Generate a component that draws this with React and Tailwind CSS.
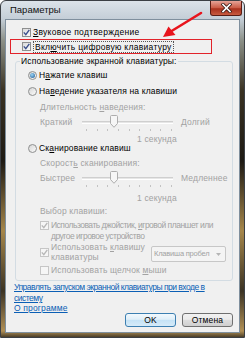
import React from 'react';

const font = { fontFamily: '"Liberation Sans", Arial, sans-serif' };

const Check = ({ checked, disabled }) => (
  <span
    className={`w-[9px] h-[9px] shrink-0 flex items-center justify-center border ${
      disabled ? 'border-[#c6c6c6] bg-[#f6f6f6]' : 'border-[#8e8f8f] bg-gradient-to-br from-[#dadada] to-[#fbfbfb]'
    }`}
  >
    {checked && (
      <svg width="7" height="7" viewBox="0 0 7 7">
        <path d="M0.8 3.4 L2.8 5.6 L6.3 0.8" fill="none" stroke={disabled ? '#b8b8b8' : '#3b4f8c'} strokeWidth="1.4" />
      </svg>
    )}
  </span>
);

const Radio = ({ checked }) => (
  <span className="w-[9px] h-[9px] shrink-0 rounded-full border border-[#8e8f8f] bg-gradient-to-br from-[#d6d6d6] to-[#fbfbfb] flex items-center justify-center">
    {checked && <span className="w-[5px] h-[5px] rounded-full bg-[radial-gradient(circle_at_40%_35%,#9bd6f6,#1b5592)]" />}
  </span>
);

const Slider = ({ left, right }) => (
  <div className="text-[#a2a2a2]">
    <div className="flex items-center h-[14px] pl-[24px]">
      <span className="w-[42px] leading-[10px]">{left}</span>
      <div className="relative w-[91px] h-[14px]">
        <div className="absolute left-0 right-0 top-[6px] h-[3px] border-t border-t-[#cfcfcf] border-b border-b-white bg-[#e6e6e6]" />
        <svg className="absolute left-[28px] top-0" width="8" height="13" viewBox="0 0 8 13">
          <path d="M0.5 1.5 Q0.5 0.5 1.5 0.5 H6.5 Q7.5 0.5 7.5 1.5 V8.5 L4 12.3 L0.5 8.5 Z" fill="#f6f6f6" stroke="#adadad" />
        </svg>
      </div>
      <span className="ml-[8px] leading-[10px]">{right}</span>
    </div>
    <div className="h-[3px] pl-[70px]">
      <div className="w-[86px] h-[2px] flex justify-between">
        {Array.from({ length: 9 }).map((_, i) => (
          <span key={i} className="w-[1px] h-[2px] bg-[#c2c2c2]" />
        ))}
      </div>
    </div>
  </div>
);

const App = () => {
  return (
    <div className="relative w-[246px] h-[349px] bg-white overflow-hidden text-[8.5px] tracking-[0.15px] text-black" style={font}>
      {/* Window frame */}
      <div className="w-[245px] h-[338px] flex flex-col rounded-t-[6px] border border-[#3b3f44] bg-[linear-gradient(to_bottom,#dce3e9_0px,#c4ced7_18px,#8b8f86_40px,#3a3222_90px,#1e1a14_160px,#a5864a_230px,#3b3324_290px,#b08f55_330px,#2a241a_338px)]">
        {/* Title bar */}
        <div className="h-[18px] flex justify-between">
          <span className="pl-[9px] self-center text-[9.5px] tracking-normal text-[#111]">Параметры</span>
          <div className="w-[32px] h-[15px] mr-[2px] rounded-b-[3px] border border-t-0 border-[#5a1d14] bg-[linear-gradient(to_bottom,#e6a397,#c95a44_50%,#a8301c_55%,#c85b40)] flex items-center justify-center">
            <svg width="11" height="10" viewBox="0 0 11 10">
              <path d="M2 1.5 L9 8.5 M9 1.5 L2 8.5" stroke="#3a1a14" strokeWidth="3.2" strokeLinecap="square" />
              <path d="M2 1.5 L9 8.5 M9 1.5 L2 8.5" stroke="#fff" strokeWidth="1.7" strokeLinecap="square" />
            </svg>
          </div>
        </div>

        {/* Client area */}
        <div className="flex-1 mx-[4px] mb-[4px] border border-[#7f8f9d] bg-[#f0f0f0] flex flex-col">
          <div className="mt-[6px] h-[12px] ml-[16px] flex items-center gap-[2px]">
            <Check checked />
            <span className="tracking-[0.3px]"><u>З</u>вуковое подтверждение</span>
          </div>

          <div className="mt-[1px] ml-[4px] w-[202px] h-[15px] border border-[#e2232a] pl-[11px] flex items-center gap-[2px]">
            <Check checked />
            <span className="border border-dotted border-[#555] px-[1px] leading-[10px] tracking-[0.3px]">Вкл<u>ю</u>чить цифровую клавиатуру</span>
          </div>

          {/* Group box */}
          <fieldset className="mt-[2px] ml-[9px] w-[218px] border border-[#d3dce3] rounded-[3px] pb-[5px]">
            <legend className="ml-[4px] px-[1px] leading-[10px]">Использование экранной клавиатуры:</legend>

            <div className="mt-[4px] h-[10px] pl-[12px] flex items-center gap-[2px]">
              <Radio checked />
              <span>Н<u>а</u>жатие клавиш</span>
            </div>
            <div className="mt-[6px] h-[10px] pl-[12px] flex items-center gap-[2px]">
              <Radio />
              <span>На<u>в</u>едение указателя на клавиши</span>
            </div>
            <div className="mt-[6px] h-[10px] pl-[24px] flex items-center text-[#a2a2a2]">
              <span>Длительность <u>н</u>аведения:</span>
            </div>
            <div className="mt-[3px]">
              <Slider left="Краткий" right="Долгий" />
            </div>
            <div className="mt-[3px] h-[9px] pl-[121px] flex items-center text-[#a2a2a2]">1 секунда</div>
            <div className="h-[9px] pl-[12px] flex items-center gap-[2px]">
              <Radio />
              <span>Ск<u>а</u>нирование клавиш</span>
            </div>
            <div className="mt-[5px] h-[10px] pl-[24px] flex items-center text-[#a2a2a2]">
              <span>Скорост<u>ь</u> сканирования:</span>
            </div>
            <div className="mt-[3px]">
              <Slider left="Быстрее" right="Медленнее" />
            </div>
            <div className="mt-[5px] h-[10px] pl-[121px] flex items-center text-[#a2a2a2]">1 секунда</div>
            <div className="mt-[3px] h-[10px] pl-[24px] flex items-center text-[#a2a2a2]">Выбор клавиши:</div>

            <div className="mt-[4px] pl-[24px] flex items-start gap-[2px] text-[#a2a2a2]">
              <span className="mt-[1px]">
                <Check checked disabled />
              </span>
              <span className="leading-[11px] whitespace-nowrap tracking-[-0.5px]">
                Использовать джойстик, <u>и</u>гровой планшет или
                <br />
                другое игровое устройство
              </span>
            </div>

            <div className="h-[20px] pl-[24px] flex text-[#a2a2a2]">
              <div className="w-[111px] flex items-center gap-[2px]">
                <Check checked disabled />
                <span className="leading-[10px] whitespace-nowrap">
                  Использовать <u>к</u>лавишу
                  <br />
                  клавиатуры
                </span>
              </div>
              <div className="self-end w-[75px] h-[16px] border border-[#c7c7c7] rounded-[2px] bg-[#f4f4f4] flex items-center justify-between pl-[2px] pr-[4px] overflow-hidden">
                <span className="whitespace-nowrap text-[7.5px] tracking-[-0.2px]">Клавиша пробел</span>
                <svg className="shrink-0 ml-[2px]" width="5" height="3" viewBox="0 0 5 3">
                  <path d="M0 0 H5 L2.5 3 Z" fill="#b5b5b5" />
                </svg>
              </div>
            </div>

            <div className="mt-[3px] h-[10px] pl-[24px] flex items-center gap-[2px] text-[#a2a2a2]">
              <Check disabled />
              <span>Использовать щелчок <u>м</u>ыши</span>
            </div>
          </fieldset>

          {/* Links */}
          <div className="mt-[1px] ml-[8px] leading-[11px] text-[#0b5fb5] underline whitespace-nowrap tracking-[-0.5px]">
            Управлять запуском экранной клавиатуры при входе в
            <br />
            систему
          </div>
          <div className="ml-[8px] leading-[8px] text-[#0b5fb5] underline">О программе</div>

          {/* Buttons */}
          <div className="mt-[1px] mr-[6px] flex justify-end gap-[6px]">
            <button className="w-[51px] h-[14px] rounded-[3px] border border-[#3c7fb1] bg-[linear-gradient(to_bottom,#f2f9fd,#e0eff9_45%,#c4e2f5_50%,#d6ebf8)] flex items-center justify-center leading-none">
              OK
            </button>
            <button className="w-[51px] h-[14px] rounded-[3px] border border-[#707070] bg-[linear-gradient(to_bottom,#f2f2f2,#ebebeb_45%,#dddddd_50%,#cfcfcf)] flex items-center justify-center leading-none">
              Отмена
            </button>
          </div>
        </div>
      </div>

      {/* Red arrow annotation */}
      <svg className="absolute left-0 top-0 pointer-events-none" width="246" height="60" viewBox="0 0 246 60">
        <path d="M201 13 L170 32" stroke="#e8141c" strokeWidth="2.6" strokeLinecap="round" />
        <path d="M163 37 L168.5 26.5 L175.5 35 Z" fill="#e8141c" />
      </svg>
    </div>
  );
};

export default App;
